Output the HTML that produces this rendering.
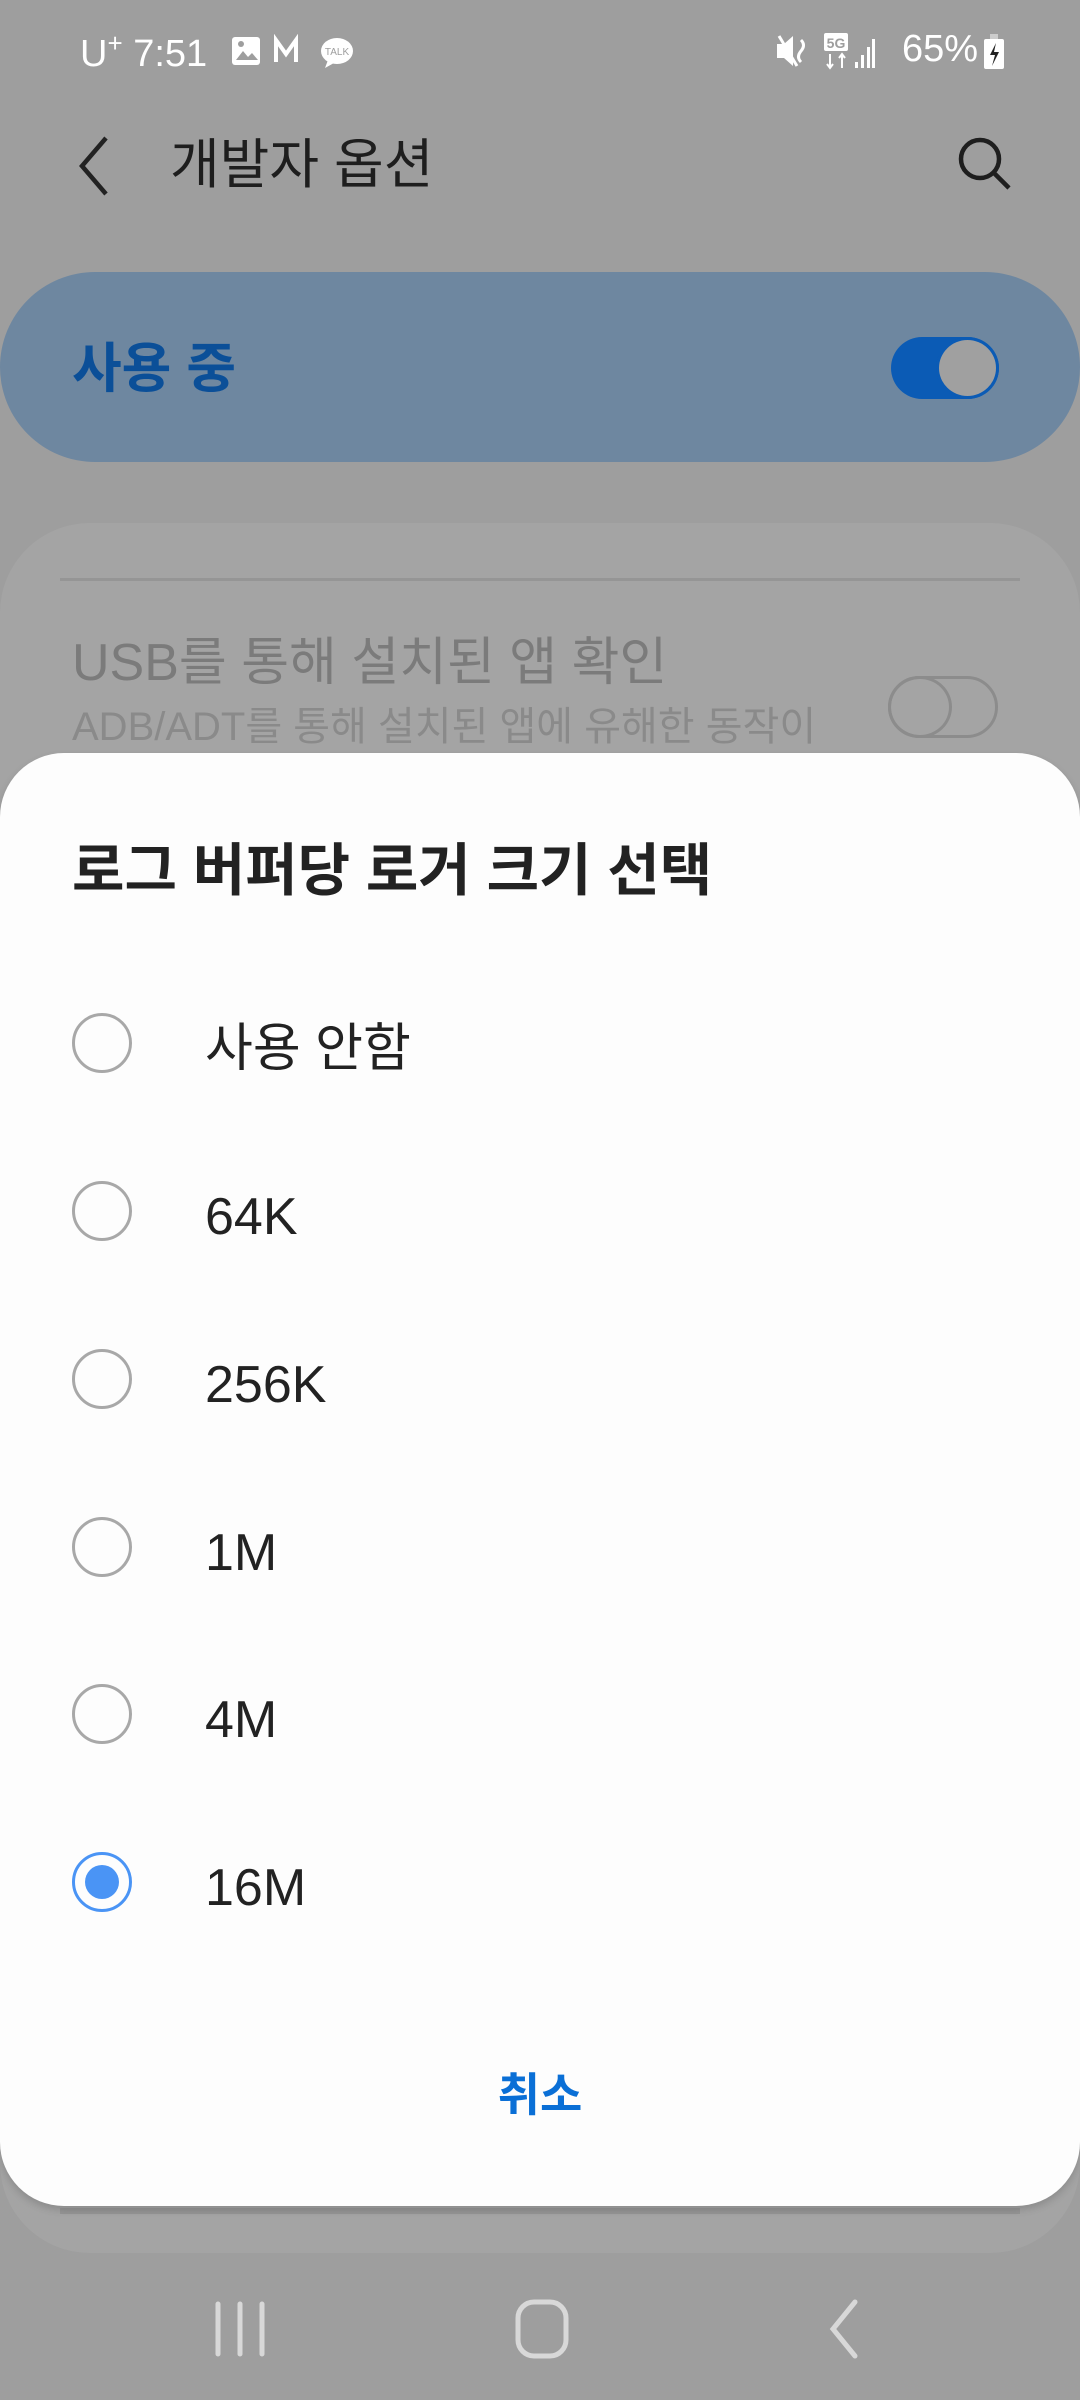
<!DOCTYPE html>
<html><head><meta charset="utf-8"><style>
*{margin:0;padding:0;box-sizing:border-box}
body{width:1080px;height:2400px;background:#9e9e9e;position:relative;overflow:hidden;font-family:"Liberation Sans","Noto Sans CJK KR",sans-serif}
.a{position:absolute}
.sb{color:#fff;font-size:38px;top:28px}
.radio{position:absolute;left:72px;width:60px;height:60px;border:3px solid #a8a8a8;border-radius:50%}
.opt{position:absolute;left:205px;font-size:52px;color:#222;line-height:60px}
</style></head><body>
<!-- status bar -->
<div class="a sb" style="left:80px;">U<sup style="font-size:26px;vertical-align:14px">+</sup> 7:51</div>
<svg class="a" style="left:230px;top:34px" width="130" height="36" viewBox="0 0 130 36">
<rect x="2" y="3" width="28" height="28" rx="3" fill="#fff"/><path d="M6 26l7-9 5 6 4-4 6 7z" fill="#9e9e9e"/><circle cx="11" cy="10" r="3" fill="#9e9e9e"/>
<path d="M46 28V6l10 14 10-14v22" stroke="#fff" stroke-width="4" fill="none"/>
<ellipse cx="107" cy="17" rx="16" ry="13" fill="#fff"/><path d="M98 26l-3 8 9-5z" fill="#fff"/><text x="107" y="21" font-size="10" text-anchor="middle" fill="#9e9e9e" font-family="Liberation Sans">TALK</text>
</svg>
<svg class="a" style="left:775px;top:30px" width="100" height="44" viewBox="0 0 100 44">
<path d="M2 14h7l9-8v30l-9-8H2z" fill="#fff"/><path d="M4 6l18 30" stroke="#fff" stroke-width="3"/><path d="M26 10q5 5 0 11q-5 6 0 11" stroke="#fff" stroke-width="3" fill="none"/>
<rect x="49" y="3" width="24" height="18" rx="2" fill="#fff"/><text x="61" y="18" font-size="14" font-weight="bold" text-anchor="middle" fill="#9e9e9e">5G</text>
<path d="M55 24v14M52 34l3 4 3-4M67 38V24M64 28l3-4 3 4" stroke="#fff" stroke-width="2" fill="none"/>
<rect x="80" y="32" width="3" height="6" fill="#fff"/><rect x="86" y="25" width="3" height="13" fill="#fff"/><rect x="92" y="17" width="3" height="21" fill="#fff"/><rect x="97" y="9" width="3" height="29" fill="#fff"/>
</svg>
<div class="a sb" style="left:902px;">65%</div>
<svg class="a" style="left:983px;top:34px" width="22" height="36" viewBox="0 0 22 36"><rect x="7" y="0" width="8" height="5" fill="#ccc"/><rect x="1" y="5" width="20" height="30" rx="2" fill="#fff"/><path d="M13 9l-6 12h5l-3 11 7-14h-5z" fill="#222"/></svg>
<!-- header -->
<svg class="a" style="left:74px;top:134px" width="40" height="64" viewBox="0 0 40 64"><path d="M32 4L8 32l24 28" stroke="#222" stroke-width="4.5" fill="none"/></svg>
<div class="a" style="left:170px;top:130px;font-size:54px;color:#1e1e1e;line-height:70px">개발자 옵션</div>
<svg class="a" style="left:955px;top:134px" width="60" height="60" viewBox="0 0 60 60"><circle cx="25" cy="25" r="19" stroke="#1e1e1e" stroke-width="4.5" fill="none"/><path d="M39 39l15 15" stroke="#1e1e1e" stroke-width="4.5"/></svg>
<!-- blue card -->
<div class="a" style="left:0;top:272px;width:1080px;height:190px;background:#6e87a0;border-radius:95px"></div>
<div class="a" style="left:72px;top:334px;font-size:54px;font-weight:bold;color:#0b4f98;line-height:70px">사용 중</div>
<div class="a" style="left:891px;top:337px;width:108px;height:62px;border-radius:31px;background:#0b5bb5"></div>
<div class="a" style="left:936px;top:337px;width:63px;height:62px;border-radius:50%;background:#a0a0a0;border:3px solid #0b5bb5"></div>
<!-- second card -->
<div class="a" style="left:0;top:523px;width:1080px;height:1730px;background:#a4a4a4;border-radius:90px"></div>
<div class="a" style="left:60px;top:578px;width:960px;height:3px;background:#959595"></div>
<div class="a" style="left:72px;top:628px;font-size:52px;color:#7b7b7b;line-height:70px">USB를 통해 설치된 앱 확인</div>
<div class="a" style="left:72px;top:702px;font-size:40px;color:#8a8a8a;line-height:50px">ADB/ADT를 통해 설치된 앱에 유해한 동작이</div>
<div class="a" style="left:888px;top:676px;width:110px;height:62px;border-radius:31px;border:3px solid #8c8c8c"></div>
<div class="a" style="left:888px;top:676px;width:64px;height:62px;border-radius:50%;border:3px solid #8c8c8c"></div>
<div class="a" style="left:60px;top:2208px;width:960px;height:6px;background:#959595"></div>
<!-- dialog -->
<div class="a" style="left:0;top:753px;width:1080px;height:1453px;background:#fdfdfd;border-radius:64px;box-shadow:0 4px 8px rgba(0,0,0,.15)"></div>
<div class="a" style="left:72px;top:836px;font-size:57px;font-weight:bold;color:#222;line-height:70px">로그 버퍼당 로거 크기 선택</div>
<div class="radio" style="top:1013px"></div><div class="opt" style="top:1019px">사용 안함</div>
<div class="radio" style="top:1181px"></div><div class="opt" style="top:1187px">64K</div>
<div class="radio" style="top:1349px"></div><div class="opt" style="top:1355px">256K</div>
<div class="radio" style="top:1517px"></div><div class="opt" style="top:1523px">1M</div>
<div class="radio" style="top:1684px"></div><div class="opt" style="top:1690px">4M</div>
<div class="radio" style="top:1852px;border-color:#4a94f5"></div>
<div class="a" style="left:85px;top:1865px;width:34px;height:34px;border-radius:50%;background:#4a94f5"></div>
<div class="opt" style="top:1858px">16M</div>
<div class="a" style="left:0;width:1080px;top:2062px;text-align:center;font-size:46px;font-weight:bold;color:#0a6fd6;line-height:66px">취소</div>
<!-- nav -->
<svg class="a" style="left:0;top:2280px" width="1080" height="100" viewBox="0 0 1080 100">
<g stroke="#d8d8d8" stroke-width="5" stroke-linecap="round" fill="none">
<path d="M218 24v50M240 24v50M262 24v50"/>
<rect x="518" y="22" width="48" height="54" rx="16"/>
<path d="M855 22L833 49l22 27"/>
</g></svg>
</body></html>
